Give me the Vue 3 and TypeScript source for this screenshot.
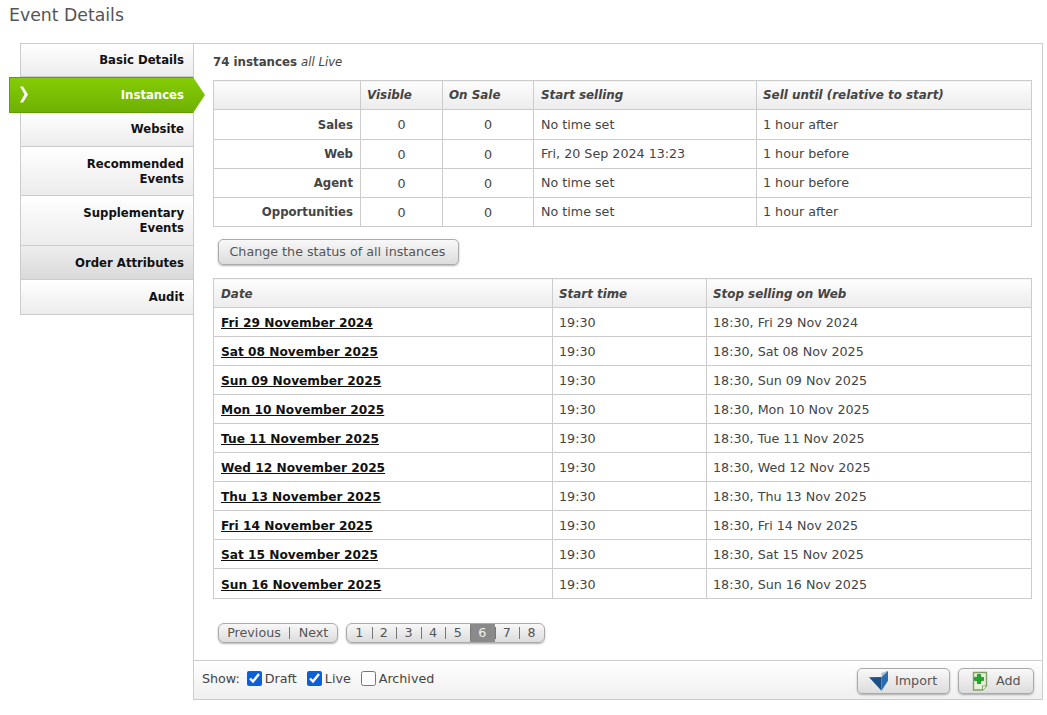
<script setup lang="ts">
const nav = [
  { label: 'Basic Details', cls: 'first' },
  { label: 'Instances', cls: 'active' },
  { label: 'Website', cls: 'web' },
  { label: 'Recommended Events', cls: 'rec' },
  { label: 'Supplementary Events', cls: 'sup' },
  { label: 'Order Attributes', cls: 'dark' },
  { label: 'Audit', cls: 'audit' },
]
const status = [
  ['Sales', '0', '0', 'No time set', '1 hour after'],
  ['Web', '0', '0', 'Fri, 20 Sep 2024 13:23', '1 hour before'],
  ['Agent', '0', '0', 'No time set', '1 hour before'],
  ['Opportunities', '0', '0', 'No time set', '1 hour after'],
]
const dates = [
  ['Fri 29 November 2024', '18:30, Fri 29 Nov 2024'],
  ['Sat 08 November 2025', '18:30, Sat 08 Nov 2025'],
  ['Sun 09 November 2025', '18:30, Sun 09 Nov 2025'],
  ['Mon 10 November 2025', '18:30, Mon 10 Nov 2025'],
  ['Tue 11 November 2025', '18:30, Tue 11 Nov 2025'],
  ['Wed 12 November 2025', '18:30, Wed 12 Nov 2025'],
  ['Thu 13 November 2025', '18:30, Thu 13 Nov 2025'],
  ['Fri 14 November 2025', '18:30, Fri 14 Nov 2025'],
  ['Sat 15 November 2025', '18:30, Sat 15 Nov 2025'],
  ['Sun 16 November 2025', '18:30, Sun 16 Nov 2025'],
]
const pages = [1, 2, 3, 4, 5, 6, 7, 8]
</script>

<template>
  <div class="page">
    <h1 class="title">Event Details</h1>
    <div class="layout">
      <nav class="nav">
        <a v-for="n in nav" :key="n.label" class="nav-item" :class="n.cls">
          <svg v-if="n.cls === 'active'" class="chev" width="12" height="20" viewBox="0 0 12 20">
            <path d="M2 1.5 L5 1.5 L10 9.5 L5 17.5 L2 17.5 L6.5 9.5 Z" fill="#fff" />
          </svg>
          <span class="nav-label">{{ n.label }}</span>
        </a>
      </nav>
      <main class="panel">
        <div class="content">
          <p class="summary"><b>74 instances</b> <i>all Live</i></p>
          <table class="grid status">
            <colgroup>
              <col style="width:147px" /><col style="width:82px" /><col style="width:91px" /><col style="width:223px" /><col />
            </colgroup>
            <thead>
              <tr><th></th><th>Visible</th><th>On Sale</th><th>Start selling</th><th>Sell until (relative to start)</th></tr>
            </thead>
            <tbody>
              <tr v-for="r in status" :key="r[0]">
                <td class="rowhead">{{ r[0] }}</td>
                <td class="num">{{ r[1] }}</td>
                <td class="num">{{ r[2] }}</td>
                <td class="txt">{{ r[3] }}</td>
                <td class="txt">{{ r[4] }}</td>
              </tr>
            </tbody>
          </table>
          <button class="btn change">Change the status of all instances</button>
          <table class="grid dates">
            <colgroup>
              <col style="width:339px" /><col style="width:154px" /><col />
            </colgroup>
            <thead>
              <tr><th>Date</th><th>Start time</th><th>Stop selling on Web</th></tr>
            </thead>
            <tbody>
              <tr v-for="d in dates" :key="d[0]">
                <td><a class="date-link">{{ d[0] }}</a></td>
                <td>19:30</td>
                <td>{{ d[1] }}</td>
              </tr>
            </tbody>
          </table>
          <div class="pager">
            <div class="pill">
              <span class="seg prev">Previous</span><span class="seg next">Next</span>
            </div>
            <div class="pill">
              <span v-for="p in pages" :key="p" class="seg pg" :class="{ cur: p === 6 }">{{ p }}</span>
            </div>
          </div>
        </div>
        <footer class="foot">
          <div class="show">
            <span class="show-label">Show:</span>
            <label class="chk"><input type="checkbox" checked />Draft</label>
            <label class="chk"><input type="checkbox" checked />Live</label>
            <label class="chk"><input type="checkbox" />Archived</label>
          </div>
          <div class="actions">
            <button class="btn act import">
              <svg width="20" height="24" viewBox="0 0 20 24">
                <path d="M0 8.3 L12.5 8 L12.5 21.7 Z" fill="#1c4f86" />
                <path d="M12.5 8 L19 1.7 L19 11.7 L12.5 21.7 Z" fill="#2b6cb0" />
                <path d="M12.5 4 L19 1.7 L12.5 8 Z" fill="#a9bfd6" />
              </svg>
              Import
            </button>
            <button class="btn act add">
              <svg width="16" height="20" viewBox="0 0 16 20">
                <path d="M1.5 1.5 H14.5 V15 L10.5 19 H1.5 Z" fill="#e6f0d8" stroke="#7f9e68" stroke-width="1.4" />
                <path d="M10.5 19 V15 H14.5" fill="#fff" stroke="#7f9e68" />
                <path d="M5.4 3.5 H8.6 V6.4 H11.5 V9.6 H8.6 V12.5 H5.4 V9.6 H2.5 V6.4 H5.4 Z" fill="#12b025" stroke="#0a4a10" stroke-width=".5" />
              </svg>
              Add
            </button>
          </div>
        </footer>
      </main>
    </div>
  </div>
</template>

<style>
html, body { margin: 0; background: #fff; }
</style>

<style scoped>
.page {
  width: 1047px;
  height: 715px;
  overflow: hidden;
  font-family: "DejaVu Sans", Verdana, sans-serif;
  font-size: 12.7px;
  color: #444;
  box-sizing: border-box;
}
.title {
  margin: 0;
  padding: 6px 0 0 9px;
  height: 43px;
  box-sizing: border-box;
  font-size: 17.3px;
  line-height: 19px;
  font-weight: 400;
  color: #555;
}
.layout { display: flex; padding-left: 20px; }
.nav {
  width: 173px;
  height: 272px;
  flex: none;
  box-sizing: border-box;
  display: flex;
  flex-direction: column;
  border-left: 1px solid #ccc;
}
.nav-item {
  position: relative;
  display: flex;
  align-items: center;
  justify-content: flex-end;
  text-align: right;
  padding: 0 9px 0 30px;
  box-sizing: border-box;
  font-weight: 700;
  font-size: 11.7px;
  line-height: 15px;
  color: #111;
  background: linear-gradient(#fff, #ececec);
  border-bottom: 1px solid #ccc;
}
.first { height: 34px; border-top: 1px solid #ccc; }
.web { height: 34px; }
.rec { height: 49px; padding-top: 2px; }
.sup { height: 50px; }
.dark { height: 34px; padding-top: 2px; background: linear-gradient(#eee, #d9d9d9); }
.audit { height: 35px; padding-top: 1px; }
.active {
  height: 36px;
  margin-left: -12px;
  margin-right: -12px;
  padding-right: 21px;
  border: 1px solid #5f9e00;
  border-right: 0;
  color: #fff;
  z-index: 2;
  background: linear-gradient(#85cc05, #6eb103);
  clip-path: polygon(0 0, calc(100% - 12px) 0, 100% 50%, calc(100% - 12px) 100%, 0 100%);
}
.chev { position: absolute; left: 8px; top: 7px; }
.panel {
  width: 850px;
  height: 657px;
  box-sizing: border-box;
  border: 1px solid #ccc;
  display: flex;
  flex-direction: column;
  background: #fff;
}
.content { flex: 1; padding: 0 10px 0 19px; min-height: 0; }
.summary { margin: 0; height: 36px; padding-top: 9px; box-sizing: border-box; line-height: 17px; }
.summary b { font-weight: 700; font-size: 11.8px; }
.summary i { font-size: 11.7px; }
.grid {
  border-collapse: collapse;
  table-layout: fixed;
  width: 819px;
  border: 1px solid #ccc;
}
.grid th, .grid td {
  border: 1px solid #ccc;
  padding: 0 6px;
  text-align: left;
  height: 29px;
  box-sizing: border-box;
  white-space: nowrap;
}
.grid th:first-child, .grid td:first-child { padding-left: 7px; padding-right: 7px; }
.status th:nth-child(4), .status td:nth-child(4) { padding-left: 7px; }
.grid th {
  font-size: 11.9px;
  font-style: italic;
  font-weight: 700;
  color: #444;
  background: linear-gradient(#fdfdfd, #ececec);
}
.dates th { padding-top: 2px; }
.status tbody tr:first-child td { height: 30px; }
.status tbody tr:not(:first-child) .txt { padding-bottom: 2px; }
.dates tbody tr:last-child td { height: 30px; padding-top: 1px; }
.rowhead { text-align: right !important; font-weight: 700; font-size: 11.7px; }
.num { text-align: center !important; }
.date-link { font-weight: 700; font-size: 12.2px; color: #111; text-decoration: underline; }
.btn {
  font-family: inherit;
  font-size: 12.7px;
  color: #555;
  border: 1px solid #aaa;
  border-radius: 5px;
  background: linear-gradient(#f8f8f8, #dcdcdc);
  box-shadow: 0 1px 2px rgba(0,0,0,.3);
}
.change {
  display: block;
  margin: 12px 0 13px 5px;
  width: 241px;
  height: 26px;
  padding: 0 2px 2px 0;
}
.pager { display: flex; gap: 8px; margin: 24px 0 0 5px; }
.pill {
  display: flex;
  height: 20px;
  box-sizing: border-box;
  border: 1px solid #aaa;
  border-radius: 6px;
  overflow: hidden;
  background: linear-gradient(#f8f8f8, #dcdcdc);
  box-shadow: 0 1px 2px rgba(0,0,0,.3);
  color: #555;
  line-height: 18px;
}
.seg { display: block; text-align: center; position: relative; }
.prev { width: 70px; border-right: 1px solid #777; height: 12px; margin-top: 3px; line-height: 12px; }
.next { width: 47px; height: 12px; margin-top: 3px; line-height: 12px; }
.pg { width: 24.6px; }
.pg + .pg::before {
  content: "";
  position: absolute;
  left: 0;
  top: 3px;
  height: 12px;
  width: 1px;
  background: #777;
}
.cur { background: #8a8a8a; color: #f0f0f0; }
.foot {
  height: 39px;
  flex: none;
  border-top: 1px solid #ccc;
  background: linear-gradient(#fff, #efefef);
  display: flex;
  align-items: center;
  justify-content: space-between;
  padding: 0 8px;
  box-sizing: border-box;
}
.show { display: flex; align-items: center; gap: 6px; padding-bottom: 4px; }
.show-label { margin-right: 1px; }
.chk { display: flex; align-items: center; margin-right: 4px; }
.chk input { width: 15px; height: 15px; margin: 0 3px 0 0; accent-color: #0b5fd7; }
.actions { display: flex; gap: 8px; margin-top: 1px; }
.act {
  height: 26px;
  display: flex;
  align-items: center;
  justify-content: flex-start;
}
.import { width: 93px; padding: 0 0 0 11px; gap: 6px; }
.add { width: 76px; padding: 0 0 0 13px; gap: 8px; }
</style>
